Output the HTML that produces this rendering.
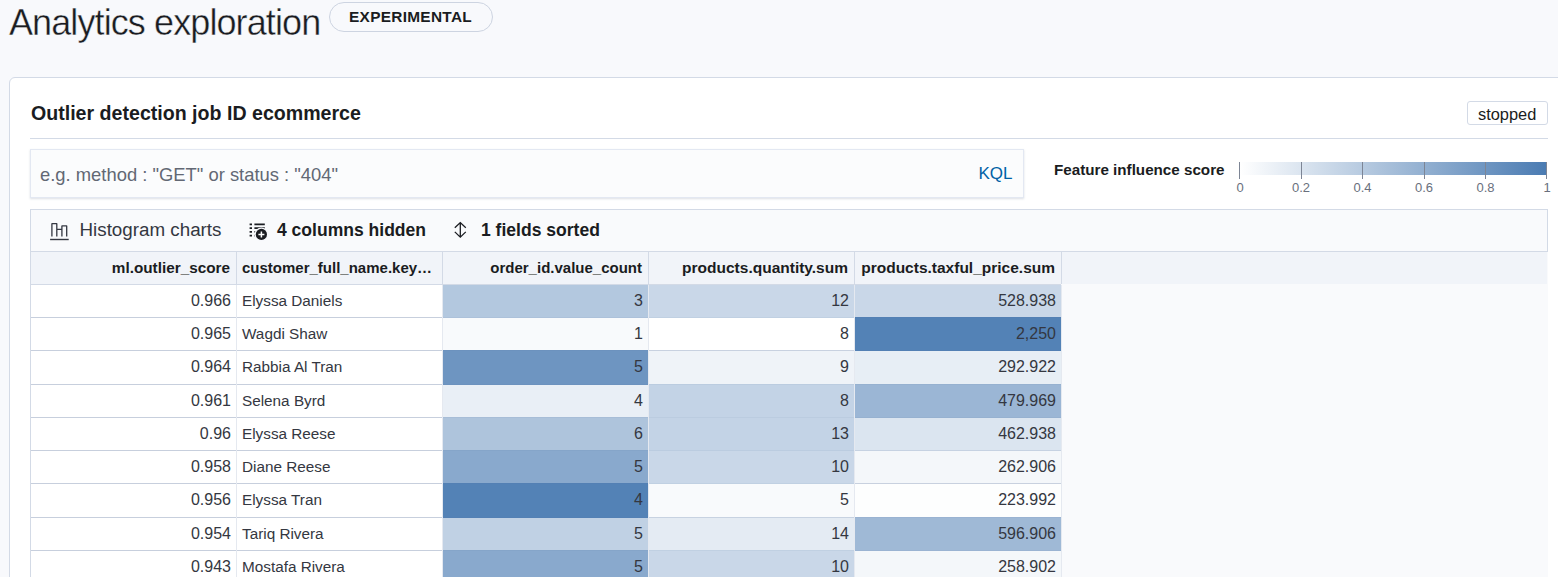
<!DOCTYPE html>
<html><head><meta charset="utf-8">
<style>
*{box-sizing:border-box;margin:0;padding:0}
html,body{width:1558px;height:577px;overflow:hidden;background:#F8F9FC;font-family:"Liberation Sans",sans-serif;color:#343741;position:relative}
.abs{position:absolute}
#title{left:9px;top:1px;font-size:36px;line-height:44px;color:#1A1C21;letter-spacing:-0.9px;white-space:nowrap;-webkit-text-stroke:0.4px #F8F9FC}
#badge{left:329px;top:2px;width:164px;height:30px;border:1.6px solid #CDD4E1;border-radius:15px;background:#F8F9FC}
#badge span{position:absolute;left:19px;top:4.5px;font-weight:bold;font-size:15.4px;line-height:17px;letter-spacing:0.3px;color:#1A1C21;white-space:nowrap}
#panel{left:9px;top:77px;width:1600px;height:600px;background:#fff;border:1px solid #D3DAE6;border-radius:6px}
#h2{left:31px;top:100px;font-weight:bold;font-size:19.6px;line-height:26px;color:#1A1C21;white-space:nowrap}
#stopped{left:1467px;top:101px;width:81px;height:24px;border:1px solid #D3DAE6;border-radius:3px;background:#fff}
#stopped span{position:absolute;left:10px;top:1.5px;font-size:16.4px;line-height:20px;color:#1A1C21}
#hr{left:30px;top:138px;width:1518px;height:1px;background:#D3DAE6}
#search{left:30px;top:149px;width:994px;height:49px;background:#FBFCFD;border:1px solid #E3E8F2;box-shadow:0 1px 2px rgba(152,162,179,.35)}
#ph{left:40px;top:163.5px;font-size:18.4px;line-height:22px;color:#626874;white-space:nowrap}
#kql{left:978.5px;top:163px;font-size:17px;line-height:22px;color:#0061A6;white-space:nowrap}
#fis{left:1054px;top:160px;font-weight:bold;font-size:15.2px;line-height:20px;color:#1A1C21;white-space:nowrap}
#grad{left:1240px;top:161.5px;width:307px;height:13px;background:linear-gradient(to right,#fff,#4A7BB2)}
.tick{position:absolute;top:161.5px;width:1.4px;height:17.5px;background:#7D8595}
.tl{position:absolute;top:179.5px;font-size:13px;line-height:16px;color:#69707D;transform:translateX(-50%);white-space:nowrap}
#toolbar{left:30px;top:209px;width:1518px;height:43px;background:#F9FAFC;border:1px solid #D3DAE6}
.tb{position:absolute;top:219px;font-size:18.8px;line-height:22px;color:#343741;white-space:nowrap}
.tbb{font-weight:bold;font-size:17.55px;color:#1A1C21}
#grid{left:30px;top:252px;width:1518px;height:400px;background:#F9FAFC;border-left:1px solid #D3DAE6}
#hdr{left:31px;top:252px;width:1516px;height:32px;background:#F1F4F9}
#hdrl{left:31px;top:284px;width:1030px;height:1px;background:#D3DAE6}
.hvl{position:absolute;top:252px;width:1px;height:32px;background:#D3DAE6}
.hc{position:absolute;top:252px;height:32px;padding:0 6px;white-space:nowrap;overflow:hidden}
.hc span{font-weight:bold;line-height:32px;color:#1A1C21;display:block}
.c{position:absolute;padding:0 6px 0 5px;white-space:nowrap;overflow:hidden}
.c span{font-size:15.3px;line-height:32px;color:#343741;display:block}
.r{text-align:right}
.n{padding-right:5px}
.n span{font-size:16px;line-height:32.5px}
.l{text-align:left}
.hl{position:absolute;height:1px}
.vl{position:absolute;top:285px;width:1px;height:300px;background:#E5E9F0}
</style></head><body>
<div id="title" class="abs">Analytics exploration</div>
<div id="badge" class="abs"><span>EXPERIMENTAL</span></div>
<div id="panel" class="abs"></div>
<div id="h2" class="abs">Outlier detection job ID ecommerce</div>
<div id="stopped" class="abs"><span>stopped</span></div>
<div id="hr" class="abs"></div>
<div id="search" class="abs"></div>
<div id="ph" class="abs">e.g. method : "GET" or status : "404"</div>
<div id="kql" class="abs">KQL</div>
<div id="fis" class="abs">Feature influence score</div>
<div id="grad" class="abs"></div>
<div class="tick" style="left:1239px"></div>
<div class="tick" style="left:1300.5px"></div>
<div class="tick" style="left:1362px"></div>
<div class="tick" style="left:1423.5px"></div>
<div class="tick" style="left:1485px"></div>
<div class="tick" style="left:1546px"></div>
<div class="tl" style="left:1240px">0</div>
<div class="tl" style="left:1301px">0.2</div>
<div class="tl" style="left:1362.5px">0.4</div>
<div class="tl" style="left:1424px">0.6</div>
<div class="tl" style="left:1485.5px">0.8</div>
<div class="tl" style="left:1547px">1</div>
<div id="toolbar" class="abs"></div>
<svg class="abs" style="left:0;top:0" width="1558" height="577" viewBox="0 0 1558 577" fill="none" stroke="#343741">
<path d="M51.9 236.6V223.8Q51.9 223.6 52.1 223.6H56.6Q56.8 223.6 56.8 223.8V236.6M56.8 229.3H61.9M61.9 236.6V226.1Q61.9 225.9 62.1 225.9H66.5Q66.7 225.9 66.7 226.1V236.6" stroke-width="1.3"/>
<path d="M50.1 239.5H68.7" stroke-width="1.4"/>
<g stroke="#1A1C21" stroke-width="1.7">
<path d="M249.6 224.4h2.4M249.6 228.2h2.4M249.6 231.9h2.4M249.6 235.6h2.4M254.4 224.4h10.4M254.4 228.2h10.4M254.4 231.9h3M254.4 235.6h3"/>
</g>
<circle cx="261.4" cy="234.4" r="7" fill="#F7F8FC" stroke="none"/>
<circle cx="261.4" cy="234.4" r="5.6" fill="#1A1C21" stroke="none"/>
<path d="M261.4 231.4v6M258.4 234.4h6" stroke="#fff" stroke-width="1.5"/>
<path d="M460.3 223v14M454.8 227.8l5.5-5.2 5.5 5.2M454.8 231.9l5.5 5.2 5.5-5.2" stroke="#1A1C21" stroke-width="1.3"/>
</svg>
<div class="tb" style="left:79.5px">Histogram charts</div>
<div class="tb tbb" style="left:277px">4 columns hidden</div>
<div class="tb tbb" style="left:481px">1 fields sorted</div>
<div id="grid" class="abs"></div>
<div id="hdr" class="abs"></div>
<div id="hdrl" class="abs"></div>
<div class="hc r" style="left:30px;width:206px"><span style="font-size:15.3px">ml.outlier_score</span></div>
<div class="hc l" style="left:236px;width:206px"><span style="font-size:15.0px">customer_full_name.key…</span></div>
<div class="hc r" style="left:442px;width:206px"><span style="font-size:15.0px">order_id.value_count</span></div>
<div class="hc r" style="left:648px;width:206px"><span style="font-size:15.5px">products.quantity.sum</span></div>
<div class="hc r" style="left:854px;width:207px"><span style="font-size:15.5px">products.taxful_price.sum</span></div>
<div class="hvl" style="left:236px"></div>
<div class="hvl" style="left:442px"></div>
<div class="hvl" style="left:648px"></div>
<div class="hvl" style="left:854px"></div>
<div class="hvl" style="left:1061px"></div>
<div class="c r n" style="left:31px;top:285px;width:205px;height:33px;background:#FFFFFF"><span>0.966</span></div>
<div class="c l" style="left:237px;top:285px;width:205px;height:33px;background:#FFFFFF"><span>Elyssa Daniels</span></div>
<div class="c r n" style="left:443px;top:285px;width:205px;height:33px;background:#B3C8DF"><span>3</span></div>
<div class="c r n" style="left:649px;top:285px;width:205px;height:33px;background:#C9D7E8"><span>12</span></div>
<div class="c r n" style="left:855px;top:285px;width:206px;height:33px;background:#C9D7E8"><span>528.938</span></div>
<div class="c r n" style="left:31px;top:318px;width:205px;height:33px;background:#FFFFFF"><span>0.965</span></div>
<div class="c l" style="left:237px;top:318px;width:205px;height:33px;background:#FFFFFF"><span>Wagdi Shaw</span></div>
<div class="c r n" style="left:443px;top:318px;width:205px;height:33px;background:#F8FAFC"><span>1</span></div>
<div class="c r n" style="left:649px;top:318px;width:205px;height:33px;background:#FFFFFF"><span>8</span></div>
<div class="c r n" style="left:855px;top:318px;width:206px;height:33px;background:#5382B6"><span>2,250</span></div>
<div class="c r n" style="left:31px;top:351px;width:205px;height:34px;background:#FFFFFF"><span>0.964</span></div>
<div class="c l" style="left:237px;top:351px;width:205px;height:34px;background:#FFFFFF"><span>Rabbia Al Tran</span></div>
<div class="c r n" style="left:443px;top:351px;width:205px;height:34px;background:#6E95C1"><span>5</span></div>
<div class="c r n" style="left:649px;top:351px;width:205px;height:34px;background:#EFF3F8"><span>9</span></div>
<div class="c r n" style="left:855px;top:351px;width:206px;height:34px;background:#E7EEF5"><span>292.922</span></div>
<div class="c r n" style="left:31px;top:385px;width:205px;height:33px;background:#FFFFFF"><span>0.961</span></div>
<div class="c l" style="left:237px;top:385px;width:205px;height:33px;background:#FFFFFF"><span>Selena Byrd</span></div>
<div class="c r n" style="left:443px;top:385px;width:205px;height:33px;background:#E9EFF6"><span>4</span></div>
<div class="c r n" style="left:649px;top:385px;width:205px;height:33px;background:#C3D3E6"><span>8</span></div>
<div class="c r n" style="left:855px;top:385px;width:206px;height:33px;background:#9BB6D5"><span>479.969</span></div>
<div class="c r n" style="left:31px;top:418px;width:205px;height:33px;background:#FFFFFF"><span>0.96</span></div>
<div class="c l" style="left:237px;top:418px;width:205px;height:33px;background:#FFFFFF"><span>Elyssa Reese</span></div>
<div class="c r n" style="left:443px;top:418px;width:205px;height:33px;background:#AEC4DC"><span>6</span></div>
<div class="c r n" style="left:649px;top:418px;width:205px;height:33px;background:#C3D3E6"><span>13</span></div>
<div class="c r n" style="left:855px;top:418px;width:206px;height:33px;background:#DBE5F0"><span>462.938</span></div>
<div class="c r n" style="left:31px;top:451px;width:205px;height:33px;background:#FFFFFF"><span>0.958</span></div>
<div class="c l" style="left:237px;top:451px;width:205px;height:33px;background:#FFFFFF"><span>Diane Reese</span></div>
<div class="c r n" style="left:443px;top:451px;width:205px;height:33px;background:#89A9CD"><span>5</span></div>
<div class="c r n" style="left:649px;top:451px;width:205px;height:33px;background:#C9D7E8"><span>10</span></div>
<div class="c r n" style="left:855px;top:451px;width:206px;height:33px;background:#F4F7FA"><span>262.906</span></div>
<div class="c r n" style="left:31px;top:484px;width:205px;height:34px;background:#FFFFFF"><span>0.956</span></div>
<div class="c l" style="left:237px;top:484px;width:205px;height:34px;background:#FFFFFF"><span>Elyssa Tran</span></div>
<div class="c r n" style="left:443px;top:484px;width:205px;height:34px;background:#5382B6"><span>4</span></div>
<div class="c r n" style="left:649px;top:484px;width:205px;height:34px;background:#F8FAFC"><span>5</span></div>
<div class="c r n" style="left:855px;top:484px;width:206px;height:34px;background:#FDFEFE"><span>223.992</span></div>
<div class="c r n" style="left:31px;top:518px;width:205px;height:33px;background:#FFFFFF"><span>0.954</span></div>
<div class="c l" style="left:237px;top:518px;width:205px;height:33px;background:#FFFFFF"><span>Tariq Rivera</span></div>
<div class="c r n" style="left:443px;top:518px;width:205px;height:33px;background:#C0D1E4"><span>5</span></div>
<div class="c r n" style="left:649px;top:518px;width:205px;height:33px;background:#E4EBF3"><span>14</span></div>
<div class="c r n" style="left:855px;top:518px;width:206px;height:33px;background:#9FB9D6"><span>596.906</span></div>
<div class="c r n" style="left:31px;top:551px;width:205px;height:33px;background:#FFFFFF"><span>0.943</span></div>
<div class="c l" style="left:237px;top:551px;width:205px;height:33px;background:#FFFFFF"><span>Mostafa Rivera</span></div>
<div class="c r n" style="left:443px;top:551px;width:205px;height:33px;background:#89A9CD"><span>5</span></div>
<div class="c r n" style="left:649px;top:551px;width:205px;height:33px;background:#C9D7E8"><span>10</span></div>
<div class="c r n" style="left:855px;top:551px;width:206px;height:33px;background:#F4F7FA"><span>258.902</span></div>
<div class="hl" style="left:31px;top:317px;width:205px;background:#C7CFDD"></div>
<div class="hl" style="left:237px;top:317px;width:205px;background:#C7CFDD"></div>
<div class="hl" style="left:443px;top:317px;width:205px;background:#ACC1DA"></div>
<div class="hl" style="left:649px;top:317px;width:205px;background:#C0D0E2"></div>
<div class="hl" style="left:855px;top:317px;width:206px;background:#5380B4"></div>
<div class="hl" style="left:31px;top:350px;width:205px;background:#C7CFDD"></div>
<div class="hl" style="left:237px;top:350px;width:205px;background:#C7CFDD"></div>
<div class="hl" style="left:443px;top:350px;width:205px;background:#6C92BE"></div>
<div class="hl" style="left:649px;top:350px;width:205px;background:#C8D1E0"></div>
<div class="hl" style="left:855px;top:350px;width:206px;background:#5380B4"></div>
<div class="hl" style="left:31px;top:384px;width:205px;background:#C7CFDD"></div>
<div class="hl" style="left:237px;top:384px;width:205px;background:#C7CFDD"></div>
<div class="hl" style="left:443px;top:384px;width:205px;background:#6C92BE"></div>
<div class="hl" style="left:649px;top:384px;width:205px;background:#BBCCE0"></div>
<div class="hl" style="left:855px;top:384px;width:206px;background:#96B1D0"></div>
<div class="hl" style="left:31px;top:417px;width:205px;background:#C7CFDD"></div>
<div class="hl" style="left:237px;top:417px;width:205px;background:#C7CFDD"></div>
<div class="hl" style="left:443px;top:417px;width:205px;background:#A7BDD7"></div>
<div class="hl" style="left:649px;top:417px;width:205px;background:#BBCCE0"></div>
<div class="hl" style="left:855px;top:417px;width:206px;background:#96B1D0"></div>
<div class="hl" style="left:31px;top:450px;width:205px;background:#C7CFDD"></div>
<div class="hl" style="left:237px;top:450px;width:205px;background:#C7CFDD"></div>
<div class="hl" style="left:443px;top:450px;width:205px;background:#85A5C9"></div>
<div class="hl" style="left:649px;top:450px;width:205px;background:#BBCCE0"></div>
<div class="hl" style="left:855px;top:450px;width:206px;background:#C6D2E2"></div>
<div class="hl" style="left:31px;top:483px;width:205px;background:#C7CFDD"></div>
<div class="hl" style="left:237px;top:483px;width:205px;background:#C7CFDD"></div>
<div class="hl" style="left:443px;top:483px;width:205px;background:#5380B4"></div>
<div class="hl" style="left:649px;top:483px;width:205px;background:#C0D0E2"></div>
<div class="hl" style="left:855px;top:483px;width:206px;background:#C8D1DF"></div>
<div class="hl" style="left:31px;top:517px;width:205px;background:#C7CFDD"></div>
<div class="hl" style="left:237px;top:517px;width:205px;background:#C7CFDD"></div>
<div class="hl" style="left:443px;top:517px;width:205px;background:#5380B4"></div>
<div class="hl" style="left:649px;top:517px;width:205px;background:#C7D2E1"></div>
<div class="hl" style="left:855px;top:517px;width:206px;background:#9AB3D2"></div>
<div class="hl" style="left:31px;top:550px;width:205px;background:#C7CFDD"></div>
<div class="hl" style="left:237px;top:550px;width:205px;background:#C7CFDD"></div>
<div class="hl" style="left:443px;top:550px;width:205px;background:#85A5C9"></div>
<div class="hl" style="left:649px;top:550px;width:205px;background:#C0D0E2"></div>
<div class="hl" style="left:855px;top:550px;width:206px;background:#9AB3D2"></div>
<div class="hl" style="left:31px;top:583px;width:205px;background:#C7CFDD"></div>
<div class="hl" style="left:237px;top:583px;width:205px;background:#C7CFDD"></div>
<div class="hl" style="left:443px;top:583px;width:205px;background:#85A5C9"></div>
<div class="hl" style="left:649px;top:583px;width:205px;background:#C0D0E2"></div>
<div class="hl" style="left:855px;top:583px;width:206px;background:#C8D1DF"></div>
<div class="vl" style="left:236px"></div>
<div class="vl" style="left:442px"></div>
<div class="vl" style="left:648px"></div>
<div class="vl" style="left:854px"></div>
<div class="vl" style="left:1061px"></div>
</body></html>
